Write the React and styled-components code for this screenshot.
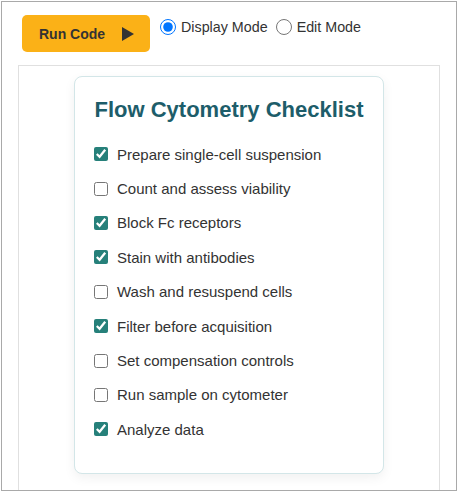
import React, { useState } from 'react';
import styled, { createGlobalStyle } from 'styled-components';

const GlobalStyle = createGlobalStyle`
  body {
    margin: 0;
    background: #fff;
    font-family: "Liberation Sans", Arial, sans-serif;
  }
`;

const Frame = styled.div`
  margin: 1px;
  width: 456px;
  height: 490px;
  box-sizing: border-box;
  border: 1px solid #a9a9a9;
  padding: 0 16px;
  overflow: hidden;
  display: flex;
  flex-direction: column;
`;

const Toolbar = styled.div`
  display: flex;
  align-items: flex-start;
  padding: 13px 0 0 4px;
  gap: 10px;
`;

const RunButton = styled.button`
  width: 128px;
  height: 37px;
  border: none;
  border-radius: 5px;
  background: #fbb117;
  color: #333;
  font-family: "Liberation Sans", Arial, sans-serif;
  font-size: 14px;
  font-weight: bold;
  display: flex;
  align-items: center;
  padding: 0 0 0 17px;
  gap: 17px;
  cursor: pointer;
`;

const Modes = styled.div`
  display: flex;
  align-items: center;
  height: 24px;
  font-size: 14.3px;
  color: #333;
  gap: 8px;
`;

const ModeLabel = styled.label`
  display: flex;
  align-items: center;
  gap: 5px;

  input {
    margin: 0;
    width: 16px;
    height: 16px;
  }
`;

const Panel = styled.div`
  margin-top: 13px;
  flex: 1;
  border: 1px solid #e0e0e0;
  border-bottom: none;
  padding-top: 10px;
  display: flex;
  justify-content: center;
  align-items: flex-start;
`;

const Card = styled.div`
  width: 310px;
  box-sizing: border-box;
  border: 1px solid #d3e6e8;
  border-radius: 8px;
  box-shadow: 0 4px 12px rgba(0, 0, 0, 0.06);
  padding: 20px 19px 26px;
  background: #fff;
`;

const Title = styled.h2`
  margin: 0 0 14px;
  text-align: center;
  color: #1d5d6a;
  font-size: 22px;
  line-height: 26px;
  font-weight: bold;
`;

const List = styled.ul`
  list-style: none;
  margin: 0;
  padding: 0;
`;

const Item = styled.li`
  display: flex;
  align-items: center;
  height: 34.4px;
  font-size: 15px;
  color: #333;
  gap: 9px;

  input {
    margin: 0;
    width: 14px;
    height: 14px;
    accent-color: #26807a;
  }
`;

const steps = [
  ['Prepare single-cell suspension', true],
  ['Count and assess viability', false],
  ['Block Fc receptors', true],
  ['Stain with antibodies', true],
  ['Wash and resuspend cells', false],
  ['Filter before acquisition', true],
  ['Set compensation controls', false],
  ['Run sample on cytometer', false],
  ['Analyze data', true],
];

const Play = () => (
  <svg width="12" height="14" viewBox="0 0 12 14">
    <path d="M0 0 L12 7 L0 14 Z" fill="#333" />
  </svg>
);

export default function App() {
  const [mode, setMode] = useState('display');
  const [checked, setChecked] = useState(steps.map((s) => s[1]));

  const toggle = (i) => setChecked((c) => c.map((v, j) => (j === i ? !v : v)));

  return (
    <>
      <GlobalStyle />
      <Frame>
        <Toolbar>
          <RunButton>
            Run Code <Play />
          </RunButton>
          <Modes>
            <ModeLabel>
              <input type="radio" checked={mode === 'display'} onChange={() => setMode('display')} />
              Display Mode
            </ModeLabel>
            <ModeLabel>
              <input type="radio" checked={mode === 'edit'} onChange={() => setMode('edit')} />
              Edit Mode
            </ModeLabel>
          </Modes>
        </Toolbar>
        <Panel>
          <Card>
            <Title>Flow Cytometry Checklist</Title>
            <List>
              {steps.map(([label], i) => (
                <Item key={label}>
                  <input type="checkbox" checked={checked[i]} onChange={() => toggle(i)} />
                  {label}
                </Item>
              ))}
            </List>
          </Card>
        </Panel>
      </Frame>
    </>
  );
}
